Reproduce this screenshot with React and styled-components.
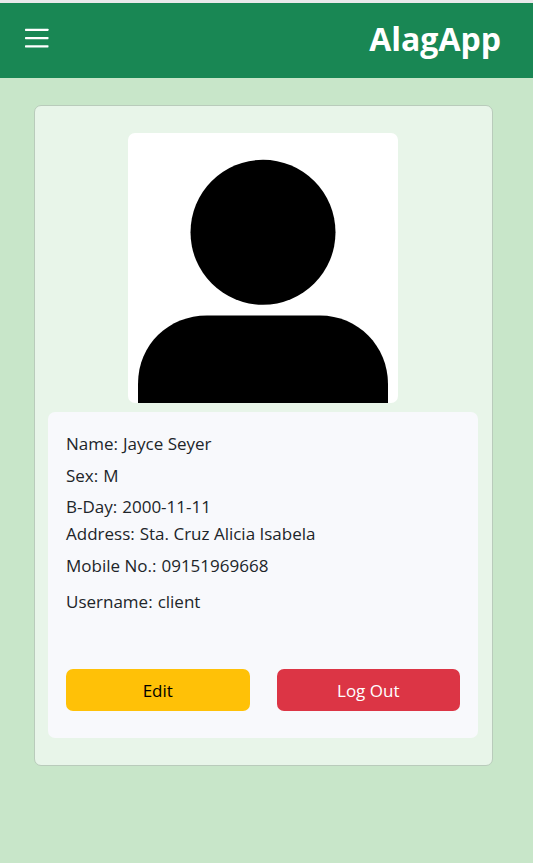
import React from 'react';
import styled, { createGlobalStyle } from 'styled-components';

const GlobalStyle = createGlobalStyle`
  *, *::before, *::after { box-sizing: border-box; }
  body {
    margin: 0;
    background: #c8e6c9;
    color: #212529;
    font-family: "Segoe UI", "Open Sans", "Noto Sans", sans-serif;
    font-size: 17px;
    font-weight: 400;
    line-height: 27px;
  }
`;

const Header = styled.header`
  display: flex;
  align-items: center;
  justify-content: space-between;
  height: 78px;
  padding: 0 32px 4px 24px;
  border-top: 3px solid #e9e9eb;
  background: #198754;
  color: #fff;
`;

const MenuButton = styled.button`
  display: flex;
  padding: 0;
  border: 0;
  background: none;
  color: inherit;
  cursor: pointer;
`;

const Brand = styled.h1`
  margin: 0;
  font-size: 32px;
  font-weight: 700;
  line-height: 40px;
`;

const Main = styled.main`
  padding: 27px 40px 27px 34px;
`;

const Card = styled.section`
  display: flex;
  flex-direction: column;
  gap: 9px;
  padding: 27px 14px 27px 13px;
  border: 1px solid #b9cbbb;
  border-radius: 7px;
  background: #e8f5e9;
`;

const Photo = styled.svg`
  display: block;
  align-self: center;
  width: 270px;
  max-width: 100%;
  border-radius: 7px;
  background: #fff;
`;

const Panel = styled.div`
  padding: 18px 18px 27px;
  border-radius: 7px;
  background: #f8f9fc;
`;

const Details = styled.dl`
  margin: 0 0 54px;
`;

const Detail = styled.div`
  display: flex;
  gap: 5px;
  margin-bottom: ${({ $space }) => $space}px;
`;

const Term = styled.dt``;

const Value = styled.dd`
  margin: 0;
`;

const Actions = styled.div`
  display: grid;
  grid-template-columns: 1fr 1fr;
  gap: 27px;
`;

const Button = styled.button`
  height: 42px;
  padding: 0;
  border: 0;
  border-radius: 7px;
  background: ${({ $danger }) => ($danger ? '#dc3545' : '#ffc107')};
  color: ${({ $danger }) => ($danger ? '#fff' : '#000')};
  font: inherit;
  cursor: pointer;
`;

const details = [
  { label: 'Name', value: 'Jayce Seyer', space: 5 },
  { label: 'Sex', value: 'M', space: 4 },
  { label: 'B-Day', value: '2000-11-11', space: 0 },
  { label: 'Address', value: 'Sta. Cruz Alicia Isabela', space: 5 },
  { label: 'Mobile No.', value: '09151969668', space: 9 },
  { label: 'Username', value: 'client', space: 0 },
];

export default function App() {
  return (
    <>
      <GlobalStyle />
      <Header>
        <MenuButton type="button" aria-label="Open menu">
          <svg width="25" height="25" viewBox="0 0 25 25" fill="currentColor" aria-hidden="true">
            <rect x="1" y="2.7" width="23.5" height="2.2" rx="0.6" />
            <rect x="1" y="11" width="23.5" height="2.2" rx="0.6" />
            <rect x="1" y="19.2" width="23.5" height="2.2" rx="0.6" />
          </svg>
        </MenuButton>
        <Brand>AlagApp</Brand>
      </Header>
      <Main>
        <Card>
          <Photo viewBox="0 0 270 270" role="img" aria-label="Profile photo">
            <circle cx="135" cy="99.3" r="72.5" />
            <path d="M10 270V251C10 211 41 182.500 79 182.500H192C230 182.500 260 213 260 251V270Z" />
          </Photo>
          <Panel>
            <Details>
              {details.map(({ label, value, space }) => (
                <Detail key={label} $space={space}>
                  <Term>{label}:</Term>
                  <Value>{value}</Value>
                </Detail>
              ))}
            </Details>
            <Actions>
              <Button type="button">Edit</Button>
              <Button type="button" $danger>Log Out</Button>
            </Actions>
          </Panel>
        </Card>
      </Main>
    </>
  );
}
